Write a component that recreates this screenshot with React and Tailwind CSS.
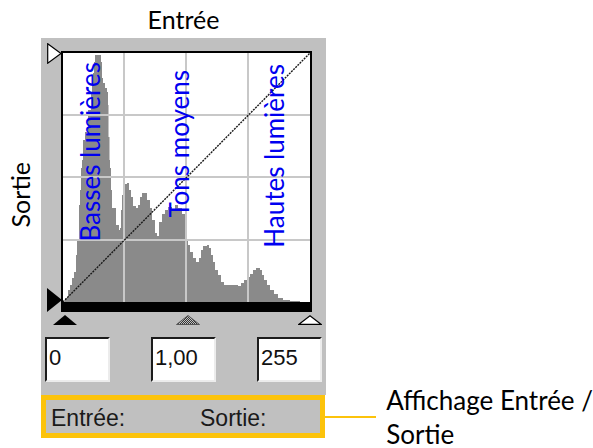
import React from "react";

const histPoints = [
  [63, 302], [65, 298], [68, 290], [70, 285], [72, 278], [74, 272], [76, 255], [77, 240],
  [79, 205], [80, 190], [81, 168], [82, 160], [83, 140], [85, 132], [88, 110], [91, 92],
  [92, 83], [93, 73], [94, 62], [95, 55], [100, 55], [101, 62], [102, 78], [103, 83],
  [105, 88], [107, 92], [108, 105], [108.5, 137], [109.5, 160], [110, 168], [111, 190],
  [112, 208], [114, 208], [116, 225], [119, 230], [120, 228], [121, 210], [122, 195],
  [124, 184], [127, 183], [129, 190], [131, 197], [133, 206], [136, 208], [138, 205],
  [140, 197], [142, 193], [145, 193], [147, 200], [150, 208], [152, 220], [155, 233],
  [157, 236], [159, 222], [162, 214], [165, 210], [168, 207], [172, 210], [175, 205],
  [178, 208], [182, 214], [185, 225], [187, 240], [188, 245], [190, 252], [193, 258],
  [196, 262], [199, 258], [201, 250], [203, 246], [207, 245], [209, 248], [211, 255],
  [213, 262], [215, 270], [218, 275], [221, 282], [224, 285], [238, 286], [241, 283],
  [244, 280], [247, 277], [250, 274], [253, 270], [256, 268], [258, 268], [260, 270],
  [262, 275], [264, 280], [267, 285], [270, 290], [274, 294], [278, 298], [283, 300],
  [290, 301], [300, 302],
];

function stepPath(pts) {
  let d = `M ${pts[0][0]} 302`;
  for (let i = 0; i < pts.length; i++) {
    const [x, y] = pts[i];
    if (i === 0) d += ` L ${x} ${y}`;
    else {
      d += ` L ${x} ${pts[i - 1][1]} L ${x} ${y}`;
    }
  }
  d += ` L ${pts[pts.length - 1][0]} 302 Z`;
  return d;
}

function Histogram() {
  return (
    <svg
      className="absolute inset-0 w-full h-full"
      viewBox="63 53 247 249"
      preserveAspectRatio="none"
    >
      <path d={stepPath(histPoints)} fill="#8a8a8a" />
      <g stroke="#c8c8c8" strokeWidth="2">
        <line x1="124" y1="53" x2="124" y2="302" />
        <line x1="186" y1="53" x2="186" y2="302" />
        <line x1="248" y1="53" x2="248" y2="302" />
        <line x1="63" y1="115" x2="310" y2="115" />
        <line x1="63" y1="177" x2="310" y2="177" />
        <line x1="63" y1="240" x2="310" y2="240" />
      </g>
      <line
        x1="63"
        y1="302"
        x2="310"
        y2="53"
        stroke="#1a1a1a"
        strokeWidth="1.4"
        strokeDasharray="2 1"
      />
    </svg>
  );
}

function TriBlack() {
  return (
    <svg width="24" height="10" viewBox="0 0 24 10">
      <polygon points="0,10 12,0 24,10" fill="#000" />
    </svg>
  );
}

function TriHatched() {
  return (
    <svg width="24" height="10" viewBox="0 0 24 10">
      <defs>
        <pattern id="chk" width="2" height="2" patternUnits="userSpaceOnUse">
          <rect width="2" height="2" fill="#c0c0c0" />
          <rect width="1" height="1" fill="#333" />
          <rect x="1" y="1" width="1" height="1" fill="#333" />
        </pattern>
      </defs>
      <polygon points="0.5,9.5 12,0.5 23.5,9.5" fill="url(#chk)" stroke="#555" strokeWidth="1" />
    </svg>
  );
}

function TriWhite() {
  return (
    <svg width="24" height="10" viewBox="0 0 24 10">
      <polygon points="0.7,9.4 12,0.8 23.3,9.4" fill="#fff" stroke="#000" strokeWidth="1.2" />
    </svg>
  );
}

function InputBox({ value }) {
  return (
    <div className="w-[65px] h-[45px] bg-white border-t-2 border-l-2 border-r-2 border-b-2 border-t-[#1c1c1c] border-l-[#1c1c1c] border-r-[#ececec] border-b-[#ececec] pl-[2px] pt-[6px] font-['Liberation_Sans',Arial,sans-serif] text-[22px] leading-[25px] text-[#111]">
      {value}
    </div>
  );
}

export default function App() {
  return (
    <div className="w-[593px] h-[448px] bg-white overflow-hidden font-['Lato',sans-serif] text-black">
      {/* Header */}
      <div className="ml-[41px] w-[285px] h-[38px] text-center text-[25px] leading-[38px]">
        Entrée
      </div>

      {/* Main row */}
      <div className="flex">
        <div className="w-[41px] h-[357px] pl-[5px] pt-[124px]">
          <div className="[writing-mode:vertical-rl] rotate-180 text-[25px] leading-[30px] whitespace-nowrap">
            Sortie
          </div>
        </div>

        <div className="w-[285px] h-[357px] bg-[#c0c0c0] flex flex-col">
          <div className="pt-[13px] pl-[20px]">
            <div className="relative w-[251px] h-[261px] bg-white border-black border-t-2 border-l-2 border-r-2 border-b-[10px]">
              <Histogram />
              <div className="absolute left-[12px] bottom-[60px] [writing-mode:vertical-rl] rotate-180 text-[26px] leading-[31px] text-[#0000f0] whitespace-nowrap">
                Basses lumières
              </div>
              <div className="absolute left-[101px] bottom-[84px] [writing-mode:vertical-rl] rotate-180 text-[26px] leading-[31px] text-[#0000f0] whitespace-nowrap">
                Tons moyens
              </div>
              <div className="absolute left-[196px] bottom-[54px] [writing-mode:vertical-rl] rotate-180 text-[26px] leading-[31px] text-[#0000f0] whitespace-nowrap">
                Hautes lumières
              </div>
              {/* left slider handles */}
              <svg className="absolute left-[-16px] top-[-10px]" width="15" height="21" viewBox="0 0 15 21">
                <polygon points="0.7,0.8 14,10.5 0.7,20.2" fill="#fff" stroke="#000" strokeWidth="1.2" />
              </svg>
              <svg className="absolute left-[-16px] top-[235px]" width="15" height="24" viewBox="0 0 15 24">
                <polygon points="0,0 15,12 0,24" fill="#000" />
              </svg>
            </div>
          </div>

          <div className="h-[25px] pl-[12px] pr-[4px] pt-[3px] flex justify-between items-start">
            <TriBlack />
            <TriHatched />
            <TriWhite />
          </div>

          <div className="h-[45px] px-[4px] flex justify-between">
            <InputBox value="0" />
            <InputBox value="1,00" />
            <InputBox value="255" />
          </div>
        </div>
      </div>

      {/* Bottom row */}
      <div className="flex items-center">
        <div className="ml-[41px] w-[285px] h-[43px] bg-[#c0c0c0] border-[5px] border-[#fcc30b] pl-[5px] pt-[5px] flex font-['Liberation_Sans',Arial,sans-serif] text-[23px] leading-[26px] text-[#1a1a1a]">
          <span className="w-[149px]">Entrée:</span>
          <span>Sortie:</span>
        </div>
        <div className="w-[52px] h-[2px] bg-[#fcc30b]" />
        <div className="ml-[10px] -my-[13px] text-[26px] leading-[34px] whitespace-nowrap">
          Affichage Entrée /
          <br />
          Sortie
        </div>
      </div>
    </div>
  );
}
